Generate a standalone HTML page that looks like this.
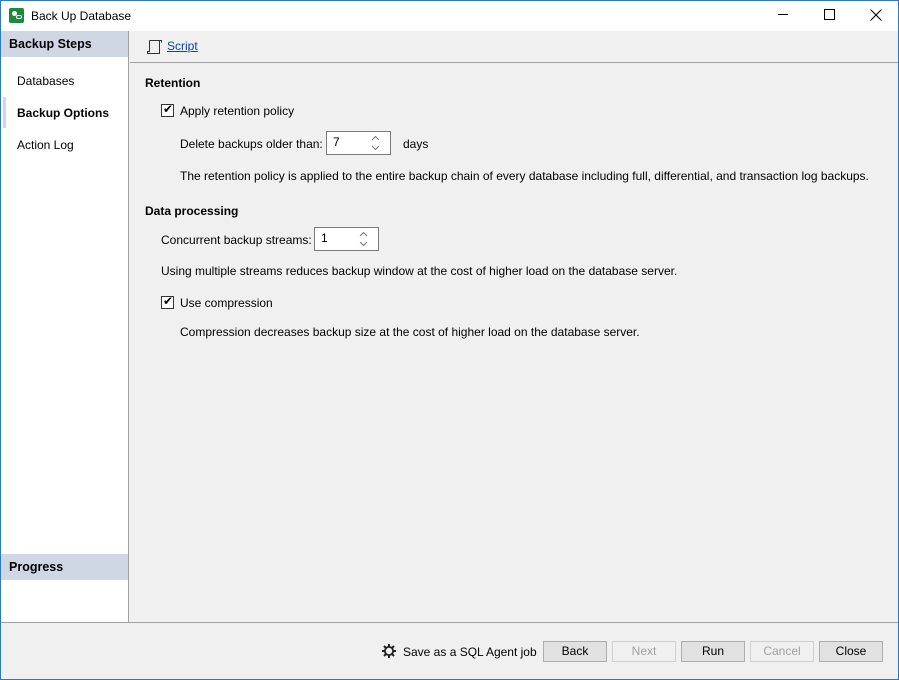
<!DOCTYPE html>
<html><head><style>
*{margin:0;padding:0;box-sizing:border-box}
body{width:899px;height:680px;overflow:hidden;font-family:"Liberation Sans",sans-serif;font-size:12px;color:#000;background:#f0f0f0;position:relative}
.abs{position:absolute}
.win{position:absolute;left:0;top:0;width:899px;height:680px;border:1px solid #2b79c2}
.title{left:1px;top:1px;width:897px;height:30px;background:#fff}
.left{left:1px;top:31px;width:128px;height:591px;background:#fff;border-right:1px solid #a0a0a0}
.hdr{background:#cfd7e4;font-weight:bold;height:26px;line-height:26px;padding-left:8px;font-size:12.5px}
.btn{position:absolute;top:641px;width:64px;height:21px;border:1px solid #adadad;background:#e1e1e1;text-align:center;line-height:19px}
.dis{color:#a0a0a0;background:#f0f0f0;border-color:#cfcfcf}
.cb{position:absolute;width:13px;height:13px;border:1px solid #333;background:#fff}
.spin{position:absolute;height:24px;background:#fff;border:1px solid #7a7a7a;padding:3px 0 0 6px}
.t{position:absolute;white-space:nowrap}
</style></head><body>
<div class="win"></div>
<div class="abs title">
 <div class="abs" style="left:8px;top:7px;width:15px;height:15px;background:#1c8a3c;border-radius:2px"><div class="abs" style="left:3px;top:3px;width:5px;height:5px;border-radius:50%;background:#fff"></div><div class="abs" style="left:7px;top:7px;width:6px;height:4px;border:1px solid #fff;border-radius:2px"></div></div>
 <div class="t" style="left:30px;top:8px">Back Up Database</div>
 <div class="t" style="left:777px;top:13px;width:10px;height:1px;background:#000"></div>
 <div class="t" style="left:823px;top:8px;width:11px;height:11px;border:1px solid #000"></div>
 <svg class="abs" style="left:869px;top:8px" width="12" height="12"><path d="M0.5 0.5L11.5 11.5M11.5 0.5L0.5 11.5" stroke="#000" stroke-width="1.1"/></svg>
</div>
<div class="abs left">
 <div class="hdr">Backup Steps</div>
 <div class="t" style="left:16px;top:43px">Databases</div>
 <div class="abs" style="left:2px;top:66px;width:3px;height:31px;background:#cfd7e4"></div>
 <div class="t" style="left:16px;top:75px;font-weight:bold">Backup Options</div>
 <div class="t" style="left:16px;top:107px">Action Log</div>
 <div class="hdr abs" style="left:0;top:523px;width:127px">Progress</div>
</div>
<div class="abs" style="left:130px;top:62px;width:768px;height:1px;background:#a0a0a0"></div>
<svg class="abs" style="left:145px;top:38px" width="18" height="18"><path d="M4.5 2.5H14.5V15.5H2.5V13.5H4.5V2.5" fill="none" stroke="#333"/><path d="M14.5 2.5h2v2" fill="none" stroke="#333"/></svg>
<div class="t" style="left:167px;top:39px;color:#0645ad;text-decoration:underline">Script</div>
<div class="t" style="left:145px;top:76px;font-weight:bold">Retention</div>
<div class="cb" style="left:161px;top:104px"><span class="abs" style="left:1px;top:-3px;font-size:12px">✔</span></div>
<div class="t" style="left:180px;top:104px">Apply retention policy</div>
<div class="t" style="left:180px;top:137px">Delete backups older than:</div>
<div class="spin" style="left:326px;top:131px;width:65px">7<svg class="abs" style="left:44px;top:3px" width="9" height="16"><path d="M1 5L4.5 1.5L8 5M1 11L4.5 14.5L8 11" fill="none" stroke="#777"/></svg></div>
<div class="t" style="left:403px;top:137px">days</div>
<div class="t" style="left:180px;top:169px">The retention policy is applied to the entire backup chain of every database including full, differential, and transaction log backups.</div>
<div class="t" style="left:145px;top:204px;font-weight:bold">Data processing</div>
<div class="t" style="left:161px;top:233px">Concurrent backup streams:</div>
<div class="spin" style="left:314px;top:227px;width:65px">1<svg class="abs" style="left:44px;top:3px" width="9" height="16"><path d="M1 5L4.5 1.5L8 5M1 11L4.5 14.5L8 11" fill="none" stroke="#777"/></svg></div>
<div class="t" style="left:161px;top:264px">Using multiple streams reduces backup window at the cost of higher load on the database server.</div>
<div class="cb" style="left:161px;top:296px"><span class="abs" style="left:1px;top:-3px;font-size:12px">✔</span></div>
<div class="t" style="left:180px;top:296px">Use compression</div>
<div class="t" style="left:180px;top:325px">Compression decreases backup size at the cost of higher load on the database server.</div>
<div class="abs" style="left:1px;top:622px;width:897px;height:1px;background:#a0a0a0"></div>
<svg class="abs" style="left:381px;top:643px" width="16" height="16" viewBox="0 0 16 16"><g stroke="#222" stroke-width="2"><path d="M8 1v14M1 8h14M3 3l10 10M13 3L3 13"/></g><circle cx="8" cy="8" r="5" fill="#222"/><circle cx="8" cy="8" r="3.2" fill="#f0f0f0"/></svg>
<div class="t" style="left:403px;top:645px">Save as a SQL Agent job</div>
<div class="btn" style="left:543px">Back</div>
<div class="btn dis" style="left:612px">Next</div>
<div class="btn" style="left:681px">Run</div>
<div class="btn dis" style="left:750px">Cancel</div>
<div class="btn" style="left:819px">Close</div>
</body></html>
